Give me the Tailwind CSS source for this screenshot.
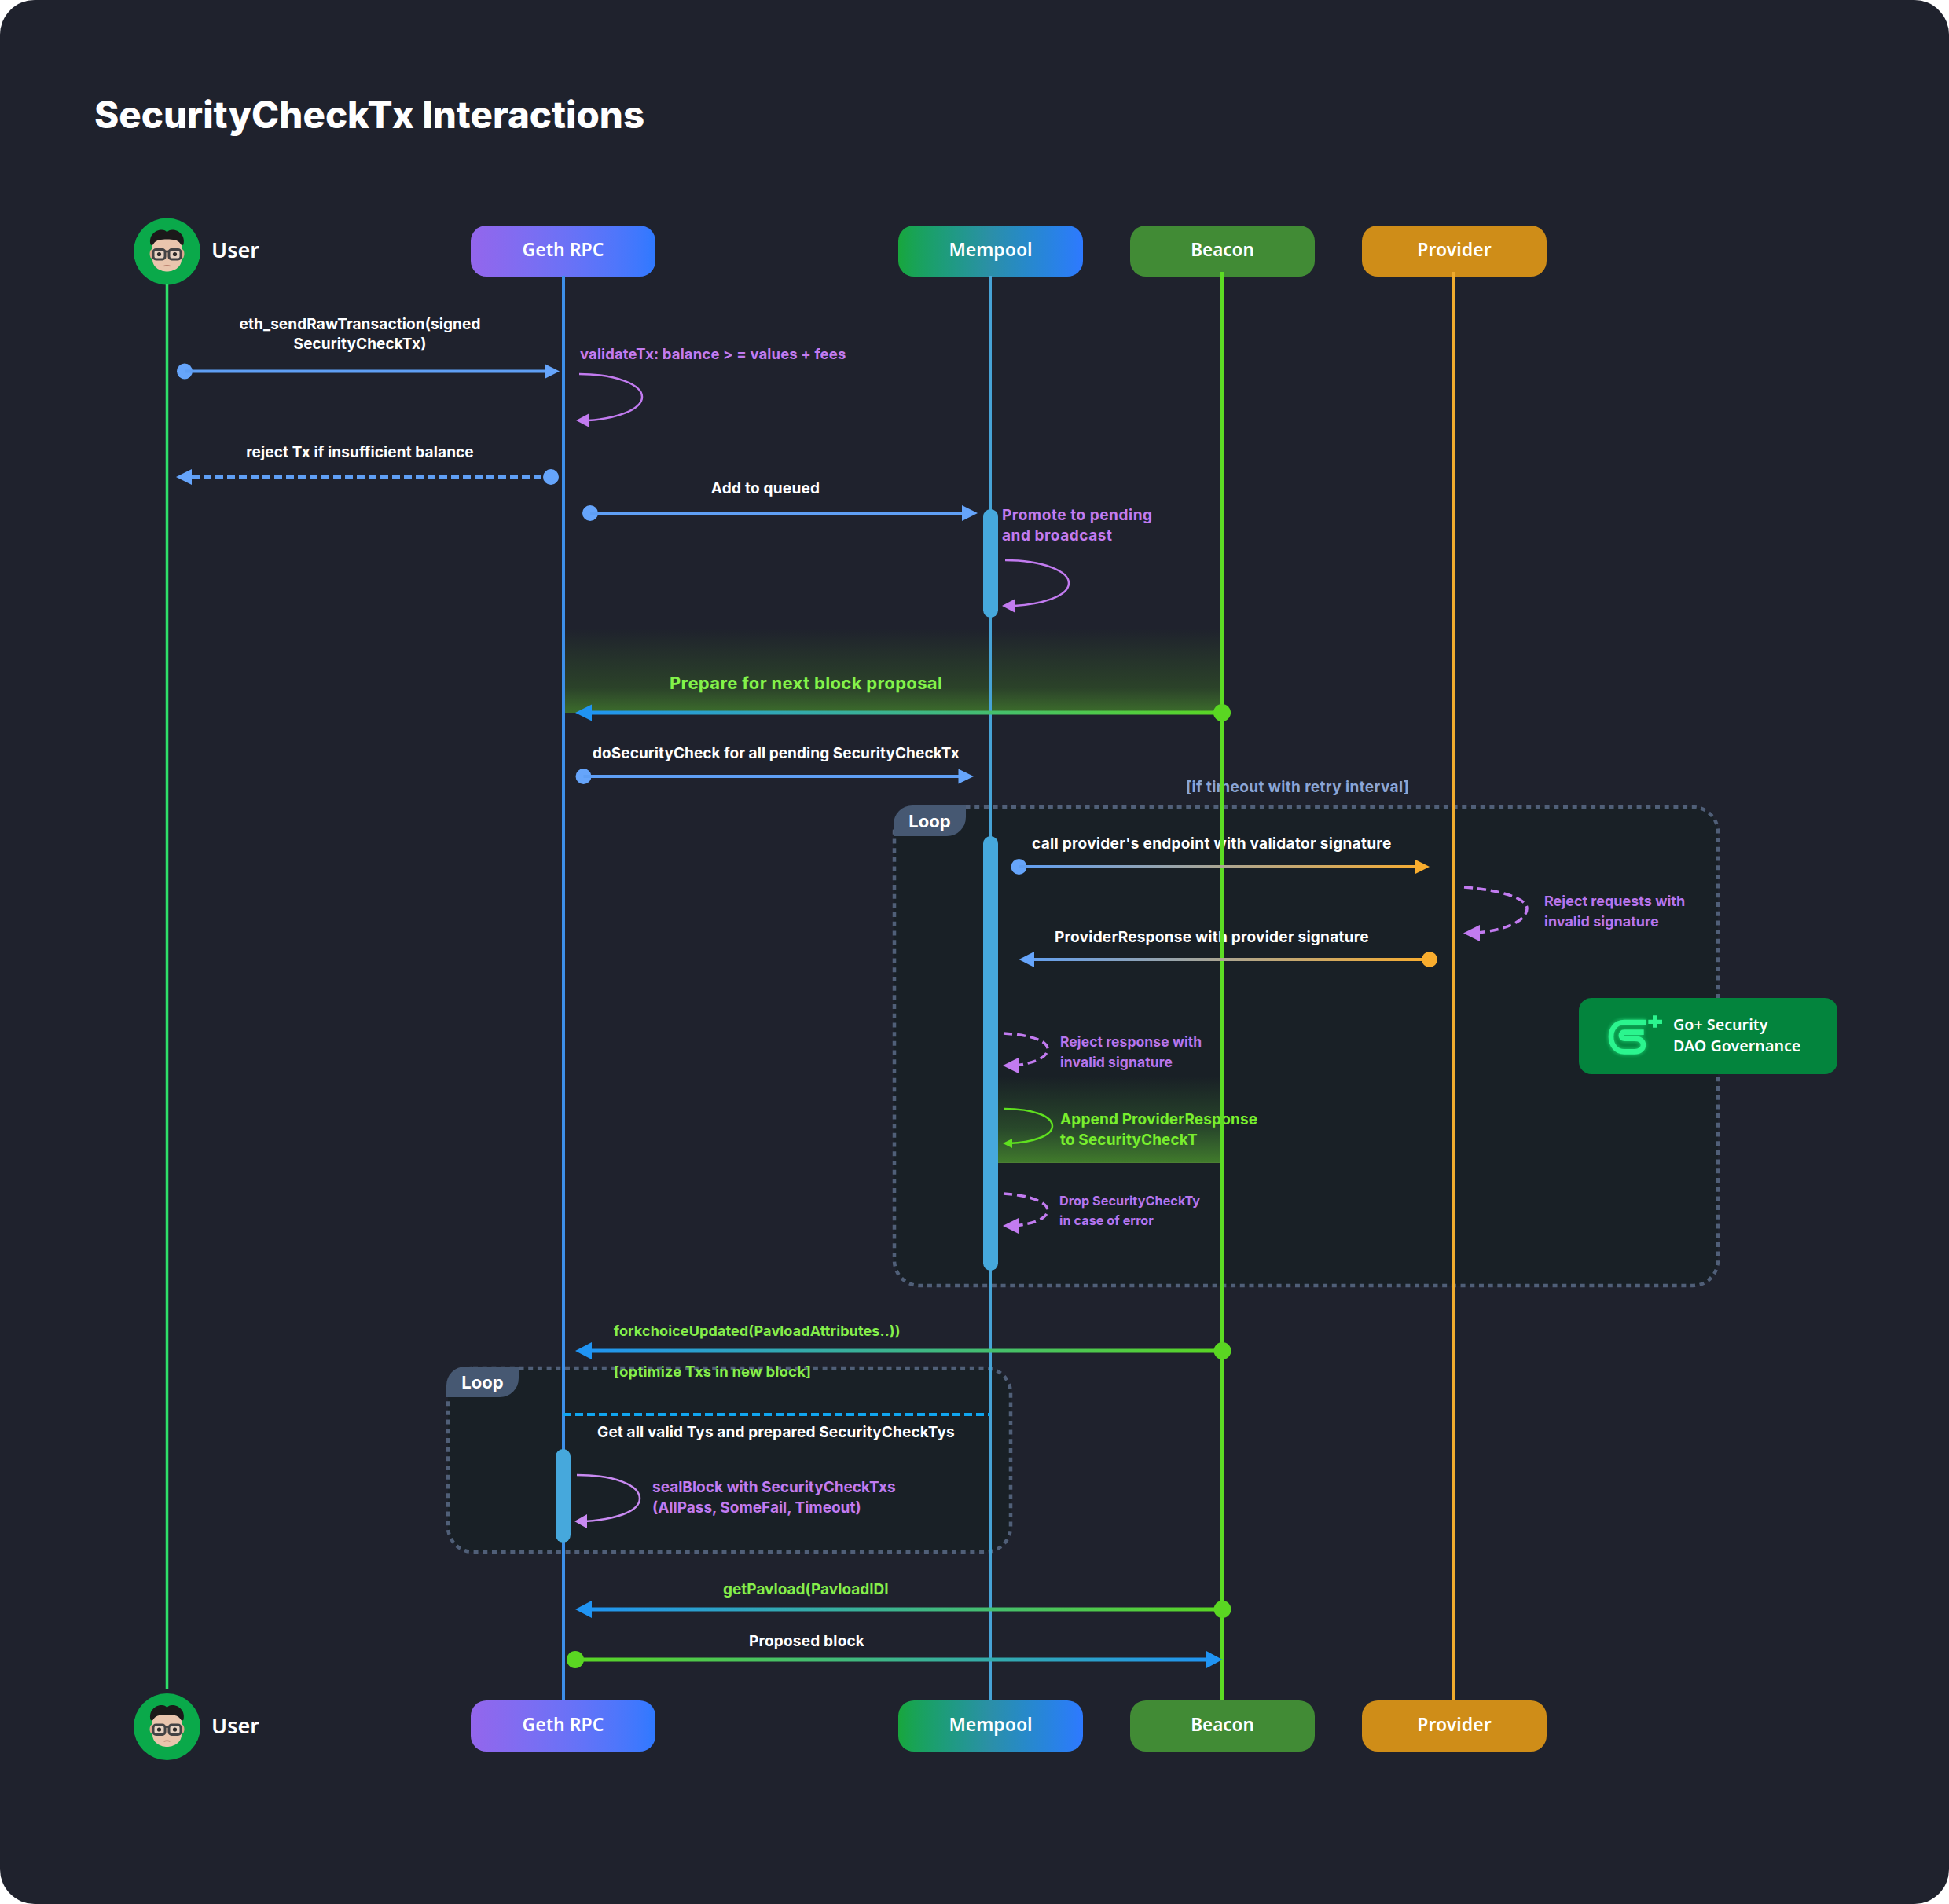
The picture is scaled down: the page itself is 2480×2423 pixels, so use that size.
<!DOCTYPE html>
<html lang="en">
<head>
  <meta charset="UTF-8">
  <title>SecurityCheckTx Interactions</title>
  <script src="https://cdn.jsdelivr.net/npm/@tailwindcss/browser@4"></script>
</head>
<body class="bg-white">
  <div class="relative w-[2480px] h-[2423px] overflow-hidden rounded-[44px] bg-[#1f222d] text-white [font-family:Inter,sans-serif] font-bold text-[19px]">

    <h1 class="absolute left-[120px] top-[146px] -translate-y-1/2 whitespace-nowrap font-extrabold text-[47.4px] [font-family:Inter,sans-serif]">SecurityCheckTx Interactions</h1>

    <!-- loop frames, under everything else -->
    <svg class="absolute inset-0" width="2480" height="2423" viewBox="0 0 2480 2423" fill="none">
      <rect x="1138" y="1027" width="1048" height="609" rx="32" fill="#192026" stroke="#505f78" stroke-width="4.5" stroke-dasharray="6 5.7"/>
      <rect x="570" y="1741" width="716" height="234" rx="32" fill="#192026" stroke="#505f78" stroke-width="4.5" stroke-dasharray="6 5.7"/>
    </svg>

    <!-- green glows -->
    <div class="absolute left-[717px] top-[800px] w-[838px] h-[107px] bg-linear-to-b from-transparent via-[#2b4229] via-70% to-[#3c6d2b]"></div>
    <div class="absolute left-[1270px] top-[1370px] w-[285px] h-[110px] bg-linear-to-b from-transparent via-[#28472a] via-60% to-[#407a2b] border-b border-[#4c7f33]"></div>

    <!-- loop tags -->
    <div class="absolute left-[1137px] top-[1025px] w-[92px] h-[39px] pt-[2px] flex items-center justify-center bg-[#465872] rounded-tl-[24px] rounded-br-[24px] text-[22px]">Loop</div>
    <div class="absolute left-[568px] top-[1739px] w-[92px] h-[39px] pt-[2px] flex items-center justify-center bg-[#465872] rounded-tl-[24px] rounded-br-[24px] text-[22px]">Loop</div>

    <!-- participants, top -->
    <span class="absolute left-[269px] top-[318px] -translate-y-1/2 [font-family:'Noto_Sans',sans-serif] font-semibold text-[27px]">User</span>
    <div class="absolute left-[599px] top-[287px] w-[235px] h-[65px] pb-[4px] flex items-center justify-center rounded-[20px] bg-linear-to-r from-[#9366ec] to-[#2e79ff] [font-family:'Noto_Sans',sans-serif] font-semibold text-[23px]">Geth RPC</div>
    <div class="absolute left-[1143px] top-[287px] w-[235px] h-[65px] pb-[4px] flex items-center justify-center rounded-[20px] bg-linear-to-r from-[#18a63c] via-[#2b8fa8] to-[#2e79ff] [font-family:'Noto_Sans',sans-serif] font-semibold text-[23px]">Mempool</div>
    <div class="absolute left-[1438px] top-[287px] w-[235px] h-[65px] pb-[4px] flex items-center justify-center rounded-[20px] bg-[#418b35] [font-family:'Noto_Sans',sans-serif] font-semibold text-[22.5px]">Beacon</div>
    <div class="absolute left-[1733px] top-[287px] w-[235px] h-[65px] pb-[4px] flex items-center justify-center rounded-[20px] bg-[#cf8d18] [font-family:'Noto_Sans',sans-serif] font-semibold text-[23px]">Provider</div>

    <!-- participants, bottom -->
    <span class="absolute left-[269px] top-[2196px] -translate-y-1/2 [font-family:'Noto_Sans',sans-serif] font-semibold text-[27px]">User</span>
    <div class="absolute left-[599px] top-[2164px] w-[235px] h-[65px] pb-[4px] flex items-center justify-center rounded-[20px] bg-linear-to-r from-[#9366ec] to-[#2e79ff] [font-family:'Noto_Sans',sans-serif] font-semibold text-[23px]">Geth RPC</div>
    <div class="absolute left-[1143px] top-[2164px] w-[235px] h-[65px] pb-[4px] flex items-center justify-center rounded-[20px] bg-linear-to-r from-[#18a63c] via-[#2b8fa8] to-[#2e79ff] [font-family:'Noto_Sans',sans-serif] font-semibold text-[23px]">Mempool</div>
    <div class="absolute left-[1438px] top-[2164px] w-[235px] h-[65px] pb-[4px] flex items-center justify-center rounded-[20px] bg-[#418b35] [font-family:'Noto_Sans',sans-serif] font-semibold text-[22.5px]">Beacon</div>
    <div class="absolute left-[1733px] top-[2164px] w-[235px] h-[65px] pb-[4px] flex items-center justify-center rounded-[20px] bg-[#cf8d18] [font-family:'Noto_Sans',sans-serif] font-semibold text-[23px]">Provider</div>

    <!-- message labels -->
    <p class="absolute left-[458px] top-[425px] -translate-x-1/2 -translate-y-1/2 whitespace-nowrap text-center leading-[25px] tracking-[0.1px]">eth_sendRawTransaction(signed<br>SecurityCheckTx)</p>
    <p class="absolute left-[738px] top-[451px] -translate-y-1/2 whitespace-nowrap text-[18.5px] tracking-[0.13px] text-[#c27bf0]">validateTx: balance &gt; = values + fees</p>
    <p class="absolute left-[458px] top-[576px] -translate-x-1/2 -translate-y-1/2 whitespace-nowrap tracking-[0.1px]">reject Tx if insufficient balance</p>
    <p class="absolute left-[974px] top-[622px] -translate-x-1/2 -translate-y-1/2 whitespace-nowrap tracking-[0.25px]">Add to queued</p>
    <p class="absolute left-[1275px] top-[669px] -translate-y-1/2 whitespace-nowrap leading-[26px] tracking-[0.54px] text-[#c27bf0]">Promote to pending<br>and broadcast</p>
    <p class="absolute left-[852px] top-[869px] -translate-y-1/2 whitespace-nowrap text-[22px] tracking-[0.35px] text-[#83f24a]">Prepare for next block proposal</p>
    <p class="absolute left-[754px] top-[959px] -translate-y-1/2 whitespace-nowrap tracking-[0.07px]">doSecurityCheck for all pending SecurityCheckTx</p>
    <p class="absolute left-[1509px] top-[1002px] -translate-y-1/2 whitespace-nowrap tracking-[0.38px] text-[#8aa5d6]">[if timeout with retry interval]</p>
    <p class="absolute left-[1313px] top-[1074px] -translate-y-1/2 whitespace-nowrap tracking-[0.3px]">call provider's endpoint with validator signature</p>
    <p class="absolute left-[1965px] top-[1160px] -translate-y-1/2 whitespace-nowrap leading-[26px] text-[18px] text-[#b775ec]">Reject requests with<br>invalid signature</p>
    <p class="absolute left-[1342px] top-[1192.5px] -translate-y-1/2 whitespace-nowrap tracking-[0.24px]">ProviderResponse with provider signature</p>
    <p class="absolute left-[1349px] top-[1339px] -translate-y-1/2 whitespace-nowrap leading-[26px] text-[17.5px] tracking-[0.08px] text-[#b775ec]">Reject response with<br>invalid signature</p>
    <p class="absolute left-[1349px] top-[1438px] -translate-y-1/2 whitespace-nowrap leading-[26px] tracking-[0.13px] text-[#78ee2e]">Append ProviderResponse<br>to SecurityCheckT</p>
    <p class="absolute left-[1348px] top-[1541px] -translate-y-1/2 whitespace-nowrap leading-[25px] text-[16.2px] tracking-[0.05px] text-[#b775ec]">Drop SecurityCheckTy<br>in case of error</p>
    <p class="absolute left-[781px] top-[1693px] -translate-y-1/2 whitespace-nowrap text-[18px] tracking-[0.12px] text-[#85ee4b]">forkchoiceUpdated(PavloadAttributes..))</p>
    <p class="absolute left-[781px] top-[1746px] -translate-y-1/2 whitespace-nowrap text-[18.5px] tracking-[0.18px] text-[#85ee4b]">[optimize Txs in new block]</p>
    <p class="absolute left-[760px] top-[1823px] -translate-y-1/2 whitespace-nowrap tracking-[0.13px]">Get all valid Tys and prepared SecurityCheckTys</p>
    <p class="absolute left-[830px] top-[1906px] -translate-y-1/2 whitespace-nowrap leading-[26px] text-[#c27bf0]">sealBlock with SecurityCheckTxs<br>(AllPass, SomeFail, Timeout)</p>
    <p class="absolute left-[920px] top-[2023px] -translate-y-1/2 whitespace-nowrap text-[#85ee4b]">getPavload(PavloadIDI</p>
    <p class="absolute left-[953px] top-[2089px] -translate-y-1/2 whitespace-nowrap tracking-[0.2px]">Proposed block</p>

    <!-- Go+ badge -->
    <div class="absolute left-[2009px] top-[1270px] w-[329px] h-[97px] pl-[120px] pb-[3px] flex flex-col justify-center rounded-[16px] bg-[#03843d] [font-family:'Noto_Sans',sans-serif] font-semibold text-[19.7px] leading-[27px]">
      <span>Go+ Security</span>
      <span>DAO Governance</span>
    </div>

    <!-- lifelines and arrows -->
    <svg class="absolute inset-0" width="2480" height="2423" viewBox="0 0 2480 2423" fill="none">
      <defs>
        <linearGradient id="beaconLeft" gradientUnits="userSpaceOnUse" x1="745" y1="0" x2="1555" y2="0"><stop offset="0" stop-color="#2094f3"/><stop offset="1" stop-color="#5ad622"/></linearGradient>
        <linearGradient id="beaconRight" gradientUnits="userSpaceOnUse" x1="732" y1="0" x2="1540" y2="0"><stop offset="0" stop-color="#5ad622"/><stop offset="1" stop-color="#2094f3"/></linearGradient>
        <linearGradient id="provider" gradientUnits="userSpaceOnUse" x1="1296" y1="0" x2="1819" y2="0"><stop offset="0" stop-color="#5f9ff5"/><stop offset="1" stop-color="#f9ad2e"/></linearGradient>
        <filter id="glow" x="-40%" y="-40%" width="180%" height="180%"><feGaussianBlur stdDeviation="7"/></filter>
        <g id="avatar">
          <circle cx="212.5" cy="320" r="42.5" fill="#0aa94a"/>
          <ellipse cx="193.5" cy="323" rx="3" ry="6" fill="#dba98f"/>
          <ellipse cx="231.5" cy="323" rx="3" ry="6" fill="#dba98f"/>
          <path d="M194 308 C194 299 231 299 231 308 L231 330 C231 341 220 345.5 212.5 345.5 C205 345.5 194 341 194 330 Z" fill="#e9c5ad"/>
          <path d="M191.5 311 C189 300 197 292.5 206 292.5 C209 292.5 211 293.5 212.5 295.5 C214 293.5 216 292.5 219 292.5 C228 292.5 236 300 233.5 311 C232 313 230.5 312 229.5 310 C226 305 220 304.5 212.5 304.5 C205 304.5 199 305 195.5 310 C194.5 312 193 313 191.5 311 Z" fill="#1b191a"/>
          <rect x="195" y="317.5" width="15" height="12.5" rx="3.5" fill="#e7d2c2" stroke="#434345" stroke-width="3"/>
          <rect x="215" y="317.5" width="15" height="12.5" rx="3.5" fill="#e7d2c2" stroke="#434345" stroke-width="3"/>
          <path d="M210 320 H215" stroke="#434345" stroke-width="2.6"/>
          <circle cx="202.5" cy="323.5" r="2.6" fill="#2d2a29"/>
          <circle cx="222.5" cy="323.5" r="2.6" fill="#2d2a29"/>
          <path d="M208.5 338.5 Q212.5 337 216.5 338.5" stroke="#b77e6c" stroke-width="1.5"/>
        </g>
      </defs>

      <use href="#avatar"/>
      <use href="#avatar" y="1877.5"/>

      <line x1="212.5" y1="362" x2="212.5" y2="2150" stroke="#2ee06a" stroke-width="3.5"/>
      <line x1="717" y1="351" x2="717" y2="2164" stroke="#3d8fe8" stroke-width="4"/>
      <line x1="1260" y1="351" x2="1260" y2="2164" stroke="#47a3d6" stroke-width="4"/>
      <line x1="1555" y1="346" x2="1555" y2="2164" stroke="#5cdc23" stroke-width="4"/>
      <line x1="1850" y1="346" x2="1850" y2="2164" stroke="#f0ac2e" stroke-width="4"/>

      <!-- activation bars -->
      <rect x="1251" y="648" width="19" height="138" rx="9.5" fill="#46a8dc"/>
      <rect x="1251" y="1064" width="19" height="553" rx="9.5" fill="#46a8dc"/>
      <rect x="707" y="1844" width="19" height="119" rx="9.5" fill="#46a8dc"/>

      <!-- user to geth -->
      <circle cx="235" cy="472.5" r="10" fill="#66a5fb"/>
      <line x1="235" y1="472.5" x2="695" y2="472.5" stroke="#5f9ff5" stroke-width="4"/>
      <polygon points="712,472.5 693,463 693,482" fill="#66a5fb"/>

      <polygon points="224,607 244,597 244,617" fill="#66a5fb"/>
      <line x1="244" y1="607" x2="695" y2="607" stroke="#5f9ff5" stroke-width="4" stroke-dasharray="10 5"/>
      <circle cx="701" cy="607" r="10" fill="#66a5fb"/>

      <circle cx="751" cy="653" r="10" fill="#66a5fb"/>
      <line x1="751" y1="653" x2="1226" y2="653" stroke="#5f9ff5" stroke-width="4"/>
      <polygon points="1244,653 1224,643 1224,663" fill="#66a5fb"/>

      <!-- self calls -->
      <path d="M737 476 C785 476 817 490 817 505 C817 522 782 533 748 535" stroke="#c27bf0" stroke-width="2.5"/>
      <polygon points="733,535 750,526 750,544" fill="#c27bf0"/>
      <path d="M1279 713 C1327 713 1360 727 1360 742 C1360 759 1325 769 1291 771" stroke="#c27bf0" stroke-width="2.5"/>
      <polygon points="1275,771 1292,762 1292,780" fill="#c27bf0"/>

      <!-- beacon to geth -->
      <line x1="750" y1="907" x2="1555" y2="907" stroke="url(#beaconLeft)" stroke-width="5"/>
      <polygon points="732,907 753,896.5 753,917.5" fill="#2094f3"/>
      <circle cx="1555" cy="907" r="11" fill="#5ad622"/>

      <circle cx="742.5" cy="988" r="10" fill="#66a5fb"/>
      <line x1="742.5" y1="988" x2="1222" y2="988" stroke="#5f9ff5" stroke-width="4"/>
      <polygon points="1239,988 1219.5,978.5 1219.5,997.5" fill="#66a5fb"/>

      <!-- mempool and provider -->
      <circle cx="1296.5" cy="1103" r="10" fill="#66a5fb"/>
      <line x1="1296.5" y1="1103" x2="1802" y2="1103" stroke="url(#provider)" stroke-width="4"/>
      <polygon points="1819,1103 1800,1093.5 1800,1112.5" fill="#f9ad2e"/>

      <path d="M1863 1129 C1910 1133 1943 1143 1943 1156 C1943 1172 1915 1184 1878 1187" stroke="#c27bf0" stroke-width="3.5" stroke-dasharray="11 6"/>
      <polygon points="1862,1187.5 1883,1177 1883,1198" fill="#c27bf0"/>

      <line x1="1314" y1="1221" x2="1819" y2="1221" stroke="url(#provider)" stroke-width="4"/>
      <polygon points="1296.5,1221 1316,1211 1316,1231" fill="#66a5fb"/>
      <circle cx="1819" cy="1221" r="10" fill="#f9ad2e"/>

      <path d="M1277 1315 C1310 1317 1333 1324 1333 1335 C1333 1346 1315 1353 1292 1356" stroke="#c27bf0" stroke-width="3.5" stroke-dasharray="11 6"/>
      <polygon points="1276,1356 1296,1346 1296,1366" fill="#c27bf0"/>

      <path d="M1278 1411 C1316 1411 1339 1421 1339 1433 C1339 1446 1312 1454 1284 1455" stroke="#5fe01f" stroke-width="2.5"/>
      <polygon points="1276,1455 1288,1449 1288,1461" fill="#5fe01f"/>

      <path d="M1277 1519 C1310 1521 1333 1530 1333 1540 C1333 1551 1315 1557 1292 1560" stroke="#c27bf0" stroke-width="3.5" stroke-dasharray="11 6"/>
      <polygon points="1276,1560 1296,1550 1296,1570" fill="#c27bf0"/>

      <!-- beacon to geth, second round -->
      <line x1="750" y1="1719" x2="1555" y2="1719" stroke="url(#beaconLeft)" stroke-width="5"/>
      <polygon points="732,1719 753,1708 753,1730" fill="#2094f3"/>
      <circle cx="1555.5" cy="1719" r="11" fill="#5ad622"/>

      <line x1="717" y1="1800" x2="1260" y2="1800" stroke="#10a5f0" stroke-width="4" stroke-dasharray="10 5"/>

      <path d="M734 1877 C782 1877 814 1890 814 1907 C814 1925 778 1934 744 1936" stroke="#c98af2" stroke-width="2.5"/>
      <polygon points="731,1936 747,1927 747,1945" fill="#c98af2"/>

      <line x1="750" y1="2048" x2="1555" y2="2048" stroke="url(#beaconLeft)" stroke-width="5"/>
      <polygon points="732,2048 753,2037 753,2059" fill="#2094f3"/>
      <circle cx="1555.5" cy="2048" r="11" fill="#5ad622"/>

      <circle cx="732" cy="2112" r="11" fill="#5ad622"/>
      <line x1="732" y1="2112" x2="1538" y2="2112" stroke="url(#beaconRight)" stroke-width="5"/>
      <polygon points="1555.5,2112 1535,2101 1535,2123" fill="#2094f3"/>

      <!-- Go+ logo -->
      <g transform="translate(2035 1285) scale(0.3333)" stroke-linecap="butt">
        <path d="M178 48 H95 C62 48 45 75 45 103 C45 135 65 160 95 160 H135 C155 160 168 148 168 135 C168 120 155 110 135 110 H95 C80 110 80 86 95 86 H170" stroke="#2bf58e" stroke-width="26" filter="url(#glow)" opacity="0.5"/>
        <path d="M178 48 H95 C62 48 45 75 45 103 C45 135 65 160 95 160 H135 C155 160 168 148 168 135 C168 120 155 110 135 110 H95 C80 110 80 86 95 86 H170" stroke="#2bf58e" stroke-width="20"/>
        <path d="M212 22 V68 M187 46 H240" stroke="#2bf58e" stroke-width="16"/>
      </g>
    </svg>
  </div>
</body>
</html>
